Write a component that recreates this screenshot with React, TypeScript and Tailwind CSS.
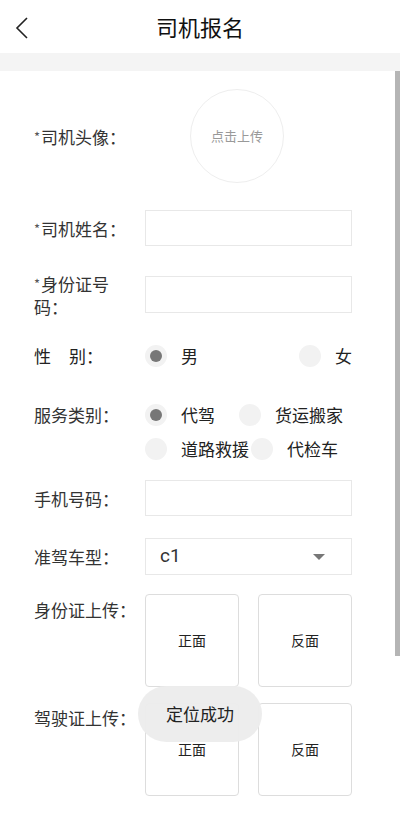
import React from 'react';

const font = { fontFamily: '"Noto Sans CJK SC", "Noto Sans", sans-serif' };

const Radio: React.FC<{ checked?: boolean }> = ({ checked }) => (
  <span className="flex h-[22px] w-[22px] shrink-0 items-center justify-center rounded-full bg-[#f2f2f2]">
    {checked && <span className="h-[12px] w-[12px] rounded-full bg-[#777777]" />}
  </span>
);

const Label: React.FC<{ children: React.ReactNode; star?: boolean }> = ({ children, star }) => (
  <div className="w-[111px] shrink-0 pr-[6px] text-[17px] leading-[23px] text-[#333333]">
    {star && (
      <span className="inline-block w-[7px] align-top text-[13px] leading-[23px] text-[#555555]">*</span>
    )}
    {children}
  </div>
);

const Option: React.FC<{ text: string; checked?: boolean; className?: string }> = ({ text, checked, className }) => (
  <div className={`flex items-center ${className ?? ''}`}>
    <Radio checked={checked} />
    <span className="ml-[14px] text-[17px] leading-[22px] text-[#222222]">{text}</span>
  </div>
);

const UploadBox: React.FC<{ text: string }> = ({ text }) => (
  <div className="flex h-[93px] w-[94px] items-center justify-center rounded-[4px] border border-[#dddddd] text-[14px] text-[#222222]">
    {text}
  </div>
);

const App: React.FC = () => {
  return (
    <div className="relative h-[814px] w-[400px] overflow-hidden bg-white" style={font}>
      {/* header */}
      <div className="relative flex h-[53px] items-center justify-center">
        <svg className="absolute left-[14px] top-[16px]" width="16" height="24" viewBox="0 0 16 24" fill="none">
          <path d="M13 2 L3 12 L13 22" stroke="#222" strokeWidth="1.6" />
        </svg>
        <span className="text-[22px] text-[#111111]">司机报名</span>
      </div>
      <div className="h-[18px] bg-[#f4f4f4]" />

      <div className="pl-[34px] pr-[48px]">
        {/* avatar */}
        <div className="mt-[18px] flex h-[94px] items-center">
          <Label star>司机头像：</Label>
          <div className="ml-[45px] flex h-[94px] w-[94px] items-center justify-center rounded-full border border-[#eeeeee] text-[13px] text-[#999999]">
            点击上传
          </div>
        </div>

        {/* name */}
        <div className="mt-[27px] flex h-[36px] items-center">
          <Label star>司机姓名：</Label>
          <div className="h-[36px] flex-1 border border-[#e8e8e8]" />
        </div>

        {/* id number */}
        <div className="mt-[30px] flex h-[37px] items-center">
          <Label star>
            <span>身份证号</span>
            <span className="block">码：</span>
          </Label>
          <div className="h-[37px] flex-1 border border-[#e8e8e8]" />
        </div>

        {/* gender */}
        <div className="mt-[32px] flex h-[22px] items-center">
          <div className="w-[111px] shrink-0 text-[17px] leading-[22px] text-[#222222]">
            性<span className="ml-[18px]">别：</span>
          </div>
          <div className="flex flex-1 items-center justify-between">
            <Option text="男" checked />
            <Option text="女" />
          </div>
        </div>

        {/* service */}
        <div className="mt-[37px] flex items-start">
          <div className="w-[111px] shrink-0 text-[17px] leading-[22px] text-[#333333]">服务类别：</div>
          <div className="flex flex-1 flex-col gap-[12px]">
            <div className="flex items-center">
              <Option text="代驾" checked />
              <Option text="货运搬家" className="ml-[24px]" />
            </div>
            <div className="flex items-center">
              <Option text="道路救援" />
              <Option text="代检车" className="ml-[2px]" />
            </div>
          </div>
        </div>

        {/* phone */}
        <div className="mt-[20px] flex h-[36px] items-center">
          <Label>手机号码：</Label>
          <div className="h-[36px] flex-1 border border-[#e8e8e8]" />
        </div>

        {/* car type */}
        <div className="mt-[22px] flex h-[37px] items-center">
          <Label>准驾车型：</Label>
          <div className="flex h-[37px] flex-1 items-center justify-between border border-[#e8e8e8] pl-[14px] pr-[26px]">
            <span className="text-[19px] text-[#333333]" style={{ fontFamily: 'Roboto, "Noto Sans", sans-serif' }}>c1</span>
            <svg width="12" height="6" viewBox="0 0 12 6">
              <path d="M0 0 L12 0 L6 6 Z" fill="#777777" />
            </svg>
          </div>
        </div>

        {/* id upload */}
        <div className="mt-[19px] flex h-[93px] items-start">
          <div className="w-[111px] shrink-0 pt-[4px] text-[17px] leading-[23px] text-[#333333]">身份证上传：</div>
          <div className="flex flex-1 justify-between">
            <UploadBox text="正面" />
            <UploadBox text="反面" />
          </div>
        </div>

        {/* driver license */}
        <div className="mt-[16px] flex h-[93px] items-start">
          <div className="w-[111px] shrink-0 pt-[3px] text-[17px] leading-[23px] text-[#333333]">驾驶证上传：</div>
          <div className="flex flex-1 justify-between">
            <UploadBox text="正面" />
            <UploadBox text="反面" />
          </div>
        </div>
      </div>

      {/* scrollbar */}
      <div className="absolute right-0 top-[71px] h-[585px] w-[5px] bg-[#b5b5b5]" />

      {/* toast */}
      <div className="absolute left-[138px] top-[686px] flex h-[56px] w-[124px] items-center justify-center rounded-full bg-[#ececec]/95 text-[17px] text-[#222222]">
        定位成功
      </div>
    </div>
  );
};

export default App;
